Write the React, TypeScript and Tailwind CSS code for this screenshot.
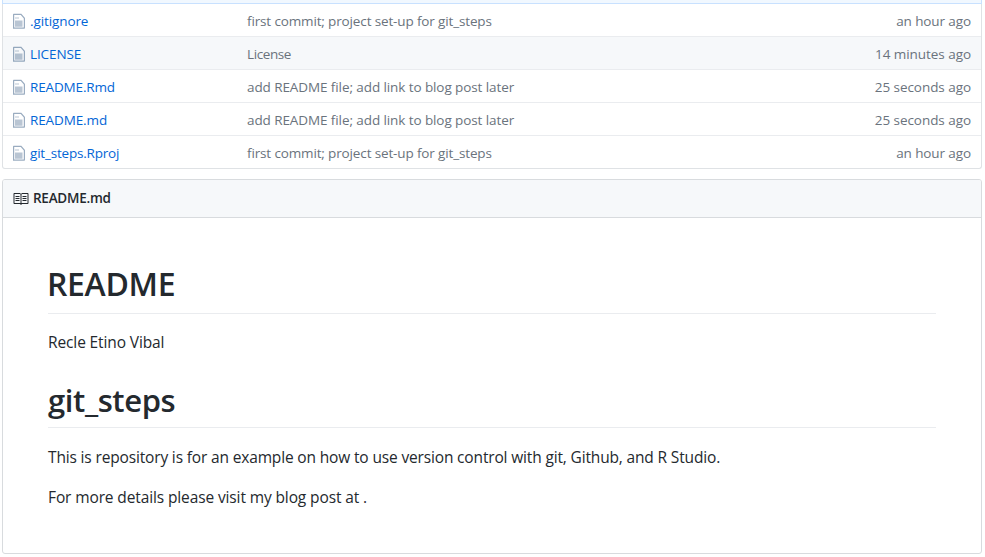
type FileRow = { name: string; message: string; age: string; nameClass: string; messageClass: string; ageClass: string; hovered?: boolean };

const files: FileRow[] = [
  { name: '.gitignore', message: 'first commit; project set-up for git_steps', age: 'an hour ago', nameClass: 'tracking-[-0.1px]', messageClass: 'tracking-[-0.14px]', ageClass: 'tracking-[-0.1px]' },
  { name: 'LICENSE', message: 'License', age: '14 minutes ago', nameClass: 'tracking-[-0.1px]', messageClass: 'tracking-[-0.4px]', ageClass: 'tracking-[-0.05px]', hovered: true },
  { name: 'README.Rmd', message: 'add README file; add link to blog post later', age: '25 seconds ago', nameClass: 'tracking-[-0.15px]', messageClass: 'tracking-[-0.09px]', ageClass: 'tracking-[-0.05px]' },
  { name: 'README.md', message: 'add README file; add link to blog post later', age: '25 seconds ago', nameClass: 'tracking-[-0.12px]', messageClass: 'tracking-[-0.09px]', ageClass: 'tracking-[-0.05px]' },
  { name: 'git_steps.Rproj', message: 'first commit; project set-up for git_steps', age: 'an hour ago', nameClass: 'tracking-[-0.2px]', messageClass: 'tracking-[-0.14px]', ageClass: 'tracking-[-0.1px]' },
];

function FileIcon() {
  return (
    <svg className="mr-[5px] h-4 w-3 shrink-0" viewBox="0 0 12 16" fill="#032f62">
      <path fillOpacity="0.28" d="M6 5.5H2v-1h4v1zM2 7.5h7.5v6.2H2V7.5z" />
      <path fillOpacity="0.4" d="M12 5v9.7c0 .55-.45 1-1 1H0V1.8c0-.55.45-1 1-1h7.3L12 5zM10.8 5.6L7.8 2.1H1.2v12.4h9.6V5.6z" />
    </svg>
  );
}

function BookIcon() {
  return (
    <svg className="mr-1 h-4 w-4 shrink-0" viewBox="0.5 0 16 16" fill="#24292e">
      <path d="M3 5h4v1H3V5zm0 3h4V7H3v1zm0 2h4V9H3v1zm11-5h-4v1h4V5zm0 2h-4v1h4V7zm0 2h-4v1h4V9zm2-6v9c0 .55-.45 1-1 1H9.5l-1 1-1-1H2c-.55 0-1-.45-1-1V3c0-.55.45-1 1-1h5.5l1 1 1-1H15c.55 0 1 .45 1 1zm-8 .5L7.5 3H2v9h6V3.5zm7-.5H9.5l-.5.5V12h6V3z" />
    </svg>
  );
}

export default function App() {
  return (
    <div className="h-[557px] w-[985px] overflow-hidden bg-white pl-0.5 pr-[3px] font-['Open_Sans','Noto_Sans',sans-serif] text-[13.5px] text-[#24292e]">
      <div className="h-1 border-x border-b border-[#c8e1ff] bg-[#f1f8ff]" />
      <div className="rounded-b-[3px] border-x border-b border-[#dfe2e5]">
        {files.map((file, i) => (
          <div
            key={file.name}
            className={`flex items-center whitespace-nowrap pl-2.5 pr-2.5 pt-0.5 leading-5 text-[#6a737d] ${i === 0 ? 'h-8' : 'h-[33px] border-t border-[#eaecef]'} ${file.hovered ? 'bg-[#f6f8fa]' : ''}`}
          >
            <div className="flex w-[234px] items-center">
              <FileIcon />
              <a className={`text-[#0366d6] ${file.nameClass}`}>{file.name}</a>
            </div>
            <span className={`flex-1 ${file.messageClass}`}>{file.message}</span>
            <span className={file.ageClass}>{file.age}</span>
          </div>
        ))}
      </div>

      <div className="mt-2.5 h-[375px] rounded-[3px] border border-[#d8dbde]">
        <div className="flex h-[38px] items-center rounded-t-[2px] border-b border-[#d8dbde] bg-[#f6f8fa] px-2.5">
          <BookIcon />
          <h3 className="pb-px font-semibold leading-5 tracking-[-0.25px]">README.md</h3>
        </div>
        <article className="px-[45px] pt-[45px] text-[15.5px]">
          <h1 className="h-[51px] border-b border-[#eaecef] text-[32px] font-semibold leading-[42px] tracking-[-0.35px] -indent-px">README</h1>
          <p className="mt-4 h-6 leading-6 tracking-[-0.12px]">Recle Etino Vibal</p>
          <h1 className="mt-6 h-[50px] border-b border-[#eaecef] text-[31px] font-semibold leading-[44px] tracking-[-0.4px]">git_steps</h1>
          <p className="mt-[17px] h-6 leading-6 tracking-[-0.155px]">This is repository is for an example on how to use version control with git, Github, and R Studio.</p>
          <p className="mt-4 h-6 leading-6 tracking-[-0.12px]">For more details please visit my blog post at .</p>
        </article>
      </div>
    </div>
  );
}
